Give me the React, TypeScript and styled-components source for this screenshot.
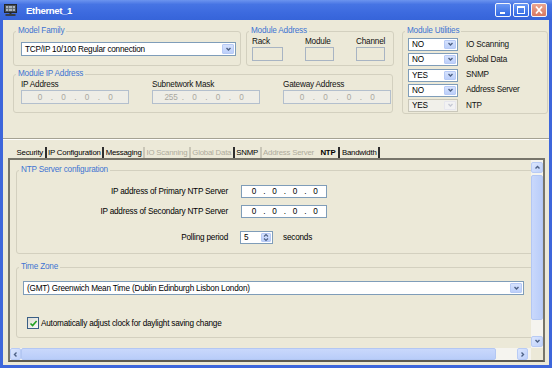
import React from "react";
import styled, { createGlobalStyle } from "styled-components";

const FONT = `"Liberation Sans", Arial, sans-serif`;

const Global = createGlobalStyle`
  html, body { margin: 0; padding: 0; background: #ece9d8; }
  body { font-family: ${FONT}; font-size: 8.2px; letter-spacing: -0.2px; color: #000; }
  *, *::before, *::after { box-sizing: border-box; }
`;

/* ---------- window chrome ---------- */
const Window = styled.div`
  width: 552px;
  height: 368px;
  display: flex;
  flex-direction: column;
  overflow: hidden;
  background: #ece9d8;
`;

const TitleBar = styled.div`
  flex: none;
  height: 20px;
  display: flex;
  align-items: center;
  padding: 0 5px 0 4px;
  background: linear-gradient(180deg, #6c94ef 0%, #4674e4 22%, #3b69de 70%, #3664d9 100%);
`;

const TitleText = styled.span`
  flex: 1;
  margin-left: 9px;
  color: #fff;
  font-size: 9.6px;
  letter-spacing: -0.35px;
  font-weight: bold;
`;

const WinButtons = styled.div`
  display: flex;
  gap: 2px;
`;

const WinButton = styled.div<{ $close?: boolean }>`
  width: 16px;
  height: 14px;
  border: 1px solid #f4f6fc;
  border-radius: 2px;
  display: flex;
  align-items: center;
  justify-content: center;
  background: ${(p) =>
    p.$close ? "linear-gradient(#eaa591, #d97860)" : "linear-gradient(#6a98f4, #3168e2)"};
`;

const Frame = styled.div`
  flex: 1;
  min-height: 0;
  display: flex;
  flex-direction: column;
  border: 3px solid #3d66db;
  border-top: 0;
`;

/* ---------- top configuration area ---------- */
const TopArea = styled.div`
  flex: none;
  height: 118px;
  display: flex;
  align-items: flex-start;
  padding: 6px 0 0 10px;
`;

const LeftCol = styled.div`
  flex: none;
  width: 381px;
  display: flex;
  flex-direction: column;
  gap: 3px;
`;

const GroupRow = styled.div`
  display: flex;
  gap: 5px;
`;

const Group = styled.fieldset<{ $w: number; $h: number; $ml?: number }>`
  flex: none;
  margin: 0 0 0 ${(p) => p.$ml ?? 0}px;
  padding: 0;
  min-width: 0;
  width: ${(p) => p.$w}px;
  height: ${(p) => p.$h}px;
  border: 1px solid #d3d0bf;
  border-radius: 3px;
`;

const Legend = styled.legend`
  margin-left: 2px;
  padding: 0 2px;
  color: #3f74d2;
  line-height: 10px;
`;

const GroupBody = styled.div<{ $pad: string }>`
  padding: ${(p) => p.$pad};
`;

const FieldGrid = styled.div<{ $cols: string; $gap: number }>`
  display: grid;
  grid-template-columns: ${(p) => p.$cols};
  column-gap: ${(p) => p.$gap}px;
  row-gap: 0;
`;

const FieldLabel = styled.span`
  line-height: 10px;
  white-space: nowrap;
  color: #111;
`;

const EmptyBox = styled.div<{ $w: number }>`
  width: ${(p) => p.$w}px;
  height: 14px;
  border: 1px solid #a8b4c3;
  background: #ece9d8;
`;

const IpBox = styled.div<{ $w: number; $h: number; $pl: number; $disabled?: boolean }>`
  width: ${(p) => p.$w}px;
  height: ${(p) => p.$h}px;
  padding-left: ${(p) => p.$pl}px;
  display: flex;
  align-items: center;
  border: 1px solid ${(p) => (p.$disabled ? "#b3bfcd" : "#7f9db9")};
  background: ${(p) => (p.$disabled ? "#eeede6" : "#fff")};
  color: ${(p) => (p.$disabled ? "#a9a89f" : "#000")};
`;

const IpSeg = styled.span<{ $w: number }>`
  flex: none;
  width: ${(p) => p.$w}px;
  text-align: center;
`;

/* combo box */
const Combo = styled.div<{ $w: number; $h?: number; $disabled?: boolean }>`
  flex: none;
  width: ${(p) => p.$w}px;
  height: ${(p) => p.$h ?? 13}px;
  display: flex;
  align-items: stretch;
  border: 1px solid ${(p) => (p.$disabled ? "#c9c7ba" : "#7f9db9")};
  background: ${(p) => (p.$disabled ? "#f1f0ea" : "#fff")};
`;

const ComboText = styled.span`
  flex: 1;
  padding-left: 3px;
  display: flex;
  align-items: center;
  white-space: nowrap;
  overflow: hidden;
`;

const ComboButton = styled.span<{ $disabled?: boolean }>`
  flex: none;
  width: 12px;
  margin: 1px;
  border-radius: 1px;
  display: flex;
  align-items: center;
  justify-content: center;
  border: 1px solid ${(p) => (p.$disabled ? "#e6e6ee" : "#b7caf5")};
  background: ${(p) =>
    p.$disabled ? "#f2f2f3" : "linear-gradient(#d6e2fd, #bccffa)"};
`;

const UtilList = styled.div`
  display: flex;
  flex-direction: column;
  gap: 2.25px;
  padding: 2px 0 0 5px;
`;

const UtilRow = styled.div`
  display: flex;
  align-items: center;
  gap: 8px;
`;

const Separator = styled.div`
  flex: none;
  height: 2px;
  border-top: 1px solid #a5a293;
  border-bottom: 1px solid #fdfdfb;
`;

/* ---------- tabs ---------- */
const TabStrip = styled.div`
  flex: none;
  height: 18px;
  display: flex;
  align-items: flex-end;
  padding: 0 0 0 10px;
`;

type TabState = "on" | "off" | "sel";

const Tab = styled.div<{ $state: TabState; $first?: boolean; $last?: boolean }>`
  height: 11px;
  line-height: 11px;
  padding: 0 1.5px;
  white-space: nowrap;
  font-size: 7.8px;
  color: ${(p) => (p.$state === "off" ? "#aeab9c" : "#000")};
  font-weight: ${(p) => (p.$state === "sel" ? "bold" : "normal")};
  border-left: 2px solid
    ${(p) =>
      p.$first || p.$state === "sel"
        ? "transparent"
        : p.$state === "off"
        ? "#c9c6b7"
        : "#2e2e2e"};
  border-right: ${(p) => (p.$last ? "2px solid #2e2e2e" : "0")};
  ${(p) => (p.$state === "sel" ? "padding: 0 3px;" : "")}
`;

/* ---------- tab panel ---------- */
const Panel = styled.div`
  flex: 1;
  min-height: 0;
  margin: 0 4px 3px 5px;
  border: 2px solid;
  border-color: #77756a #77756a #5b5950 #77756a;
  display: grid;
  grid-template-columns: 1fr 12px;
  grid-template-rows: 1fr 12px;
`;

const Viewport = styled.div`
  overflow: hidden;
  padding: 5px 0 0 6px;
  display: flex;
  flex-direction: column;
  gap: 8px;
`;

const NtpGrid = styled.div`
  display: grid;
  grid-template-columns: 211px auto 1fr;
  column-gap: 13px;
  row-gap: 7px;
  align-items: center;
`;

const RowLabel = styled.span`
  text-align: right;
  white-space: nowrap;
  line-height: 13px;
`;

const PollCell = styled.div`
  grid-column: 2 / span 2;
  margin-top: 6px;
  margin-left: -1px;
  display: flex;
  align-items: center;
  gap: 10px;
`;

const PollLabel = styled(RowLabel)`
  margin-top: 6px;
`;

const Spin = styled.div`
  width: 33px;
  height: 13px;
  display: flex;
  border: 1px solid #7f9db9;
  background: #fff;
`;

const SpinText = styled.span`
  flex: 1;
  padding-left: 3px;
  display: flex;
  align-items: center;
`;

const SpinButton = styled.span`
  width: 10px;
  margin: 1px;
  border-radius: 1px;
  border: 1px solid #b7caf5;
  background: linear-gradient(#d6e2fd, #bccffa);
  display: flex;
  align-items: center;
  justify-content: center;
`;

const CheckRow = styled.label`
  display: flex;
  align-items: center;
  gap: 2px;
  margin: 22px 0 0 4px;
`;

const CheckBox = styled.span`
  width: 12px;
  height: 12px;
  border: 1px solid #3a5f86;
  background: linear-gradient(135deg, #dcdcd3, #fafaf8);
  display: flex;
  align-items: center;
  justify-content: center;
`;

/* scrollbars */
const VScroll = styled.div`
  display: flex;
  flex-direction: column;
  background: #f5f4ef;
  padding: 2px 0 1px;
`;

const HScroll = styled.div`
  display: flex;
  background: #f5f4ef;
  padding-right: 3px;
`;

const ScrollBtn = styled.div<{ $w: number; $h: number }>`
  flex: none;
  width: ${(p) => p.$w}px;
  height: ${(p) => p.$h}px;
  border: 1px solid #b8cbf5;
  border-radius: 2px;
  background: linear-gradient(135deg, #dbe6fe, #bfd1fa);
  display: flex;
  align-items: center;
  justify-content: center;
`;

const Track = styled.div<{ $dir: "v" | "h" }>`
  flex: 1;
  display: flex;
  flex-direction: ${(p) => (p.$dir === "v" ? "column" : "row")};
  padding: ${(p) => (p.$dir === "v" ? "2px 0 0" : "0")};
`;

const Thumb = styled.div<{ $dir: "v" | "h"; $len: number }>`
  flex: none;
  ${(p) => (p.$dir === "v" ? `height: ${p.$len}px;` : `width: ${p.$len}px;`)}
  border: 1px solid #b3c7f3;
  border-radius: 2px;
  background: ${(p) =>
    p.$dir === "v"
      ? "linear-gradient(90deg, #c9d8fc, #b9cdf9)"
      : "linear-gradient(#c9d8fc, #b9cdf9)"};
`;

const Corner = styled.div`
  background: #ece9d8;
`;

/* ---------- small drawings ---------- */
const Chevron = ({ dir = "down", color = "#4d6185" }: { dir?: "down" | "up" | "left" | "right"; color?: string }) => {
  const d =
    dir === "down"
      ? "M1.5 2 L3.5 4 L5.5 2"
      : dir === "up"
      ? "M1.5 4.5 L3.5 2.5 L5.5 4.5"
      : dir === "left"
      ? "M4.5 1.5 L2.5 3.5 L4.5 5.5"
      : "M2.5 1.5 L4.5 3.5 L2.5 5.5";
  return (
    <svg width="7" height="7" viewBox="0 0 7 7">
      <path d={d} fill="none" stroke={color} strokeWidth="1.4" />
    </svg>
  );
};

const AppIcon = () => (
  <svg width="13" height="12" viewBox="0 0 13 12">
    <rect x="0.5" y="0.5" width="12" height="8" fill="#4a4f57" stroke="#23262b" />
    <rect x="2" y="2" width="9" height="5" fill="#a9b3bd" />
    <path d="M2 4.5 H11 M4.5 2 V7 M8.5 2 V7" stroke="#5d6670" strokeWidth="0.8" />
    <rect x="5.5" y="9" width="2" height="1" fill="#2b2e33" />
    <rect x="1.5" y="10" width="10" height="2" fill="#3a3e44" />
  </svg>
);

const MinGlyph = () => (
  <svg width="10" height="10" viewBox="0 0 10 10">
    <rect x="2" y="7" width="5" height="2" fill="#fff" />
  </svg>
);
const MaxGlyph = () => (
  <svg width="10" height="10" viewBox="0 0 10 10">
    <rect x="1.5" y="1.5" width="7" height="7" fill="none" stroke="#fff" />
    <rect x="1" y="1" width="8" height="2" fill="#fff" />
  </svg>
);
const CloseGlyph = () => (
  <svg width="10" height="10" viewBox="0 0 10 10">
    <path d="M2 1.5 L8 8.5 M8 1.5 L2 8.5" stroke="#fff" strokeWidth="1.8" />
  </svg>
);

const Check = () => (
  <svg width="9" height="9" viewBox="0 0 9 9">
    <path d="M1.5 4.5 L3.6 6.6 L7.6 2" fill="none" stroke="#21a121" strokeWidth="1.6" />
  </svg>
);

/* ---------- composites ---------- */
const ComboField = ({
  w,
  h,
  value,
  disabled,
}: {
  w: number;
  h?: number;
  value: string;
  disabled?: boolean;
}) => (
  <Combo $w={w} $h={h} $disabled={disabled}>
    <ComboText>{value}</ComboText>
    <ComboButton $disabled={disabled}>
      <Chevron color={disabled ? "#c6c9d4" : "#4d6185"} />
    </ComboButton>
  </Combo>
);

const IpField = ({
  parts,
  w,
  h,
  pl,
  seg,
  dot,
  disabled,
}: {
  parts: string[];
  w: number;
  h: number;
  pl: number;
  seg: number;
  dot: number;
  disabled?: boolean;
}) => (
  <IpBox $w={w} $h={h} $pl={pl} $disabled={disabled}>
    {parts.map((p, i) => (
      <React.Fragment key={i}>
        {i > 0 && <IpSeg $w={dot}>.</IpSeg>}
        <IpSeg $w={seg}>{p}</IpSeg>
      </React.Fragment>
    ))}
  </IpBox>
);

const utilities: [string, string, boolean?][] = [
  ["NO", "IO Scanning"],
  ["NO", "Global Data"],
  ["YES", "SNMP"],
  ["NO", "Address Server"],
  ["YES", "NTP", true],
];

const tabs: [string, TabState][] = [
  ["Security", "on"],
  ["IP Configuration", "on"],
  ["Messaging", "on"],
  ["IO Scanning", "off"],
  ["Global Data", "off"],
  ["SNMP", "on"],
  ["Address Server", "off"],
  ["NTP", "sel"],
  ["Bandwidth", "on"],
];

export default function App() {
  return (
    <>
      <Global />
      <Window>
        <TitleBar>
          <AppIcon />
          <TitleText>Ethernet_1</TitleText>
          <WinButtons>
            <WinButton>
              <MinGlyph />
            </WinButton>
            <WinButton>
              <MaxGlyph />
            </WinButton>
            <WinButton $close>
              <CloseGlyph />
            </WinButton>
          </WinButtons>
        </TitleBar>

        <Frame>
          <TopArea>
            <LeftCol>
              <GroupRow>
                <Group $w={228} $h={40}>
                  <Legend>Model Family</Legend>
                  <GroupBody $pad="6px 3px 0 7px">
                    <ComboField w={215} h={14} value="TCP/IP 10/100 Regular connection" />
                  </GroupBody>
                </Group>
                <Group $w={148} $h={40}>
                  <Legend>Module Address</Legend>
                  <GroupBody $pad="1px 0 0 5px">
                    <FieldGrid $cols="31px 29px 29px" $gap={22}>
                      <FieldLabel>Rack</FieldLabel>
                      <FieldLabel>Module</FieldLabel>
                      <FieldLabel>Channel</FieldLabel>
                      <EmptyBox $w={31} />
                      <EmptyBox $w={29} />
                      <EmptyBox $w={29} />
                    </FieldGrid>
                  </GroupBody>
                </Group>
              </GroupRow>
              <Group $w={380} $h={44}>
                <Legend>Module IP Address</Legend>
                <GroupBody $pad="1px 0 0 7px">
                  <FieldGrid $cols="108px 108px 108px" $gap={23}>
                    <FieldLabel>IP Address</FieldLabel>
                    <FieldLabel>Subnetwork Mask</FieldLabel>
                    <FieldLabel>Gateway Address</FieldLabel>
                    <IpField parts={["0", "0", "0", "0"]} w={108} h={14} pl={9} seg={18} dot={5.5} disabled />
                    <IpField parts={["255", "0", "0", "0"]} w={108} h={14} pl={9} seg={18} dot={5.5} disabled />
                    <IpField parts={["0", "0", "0", "0"]} w={108} h={14} pl={9} seg={18} dot={5.5} disabled />
                  </FieldGrid>
                </GroupBody>
              </Group>
            </LeftCol>

            <Group $w={146} $h={88} $ml={8}>
              <Legend>Module Utilities</Legend>
              <UtilList>
                {utilities.map(([v, label, dis]) => (
                  <UtilRow key={label}>
                    <ComboField w={50} value={v} disabled={dis} />
                    <FieldLabel>{label}</FieldLabel>
                  </UtilRow>
                ))}
              </UtilList>
            </Group>
          </TopArea>

          <Separator />

          <TabStrip>
            {tabs.map(([t, s], i) => (
              <Tab key={t} $state={s} $first={i === 0} $last={i === tabs.length - 1}>
                {t}
              </Tab>
            ))}
          </TabStrip>

          <Panel>
            <Viewport>
              <Group $w={525} $h={89}>
                <Legend>NTP Server configuration</Legend>
                <GroupBody $pad="10px 0 0 0">
                  <NtpGrid>
                    <RowLabel>IP address of Primary NTP Server</RowLabel>
                    <IpField parts={["0", "0", "0", "0"]} w={86} h={13} pl={5} seg={14} dot={6.5} />
                    <span />
                    <RowLabel>IP address of Secondary NTP Server</RowLabel>
                    <IpField parts={["0", "0", "0", "0"]} w={86} h={13} pl={5} seg={14} dot={6.5} />
                    <span />
                    <PollLabel>Polling period</PollLabel>
                    <PollCell>
                      <Spin>
                        <SpinText>5</SpinText>
                        <SpinButton>
                          <svg width="6" height="9" viewBox="0 0 6 9">
                            <path d="M1 3.5 L3 1.5 L5 3.5 M1 5.5 L3 7.5 L5 5.5" fill="none" stroke="#4d6185" strokeWidth="1.1" />
                          </svg>
                        </SpinButton>
                      </Spin>
                      <span>seconds</span>
                    </PollCell>
                  </NtpGrid>
                </GroupBody>
              </Group>

              <Group $w={525} $h={76}>
                <Legend>Time Zone</Legend>
                <GroupBody $pad="9px 0 0 6px">
                  <ComboField w={501} h={14} value="(GMT) Greenwich Mean Time (Dublin Edinburgh Lisbon London)" />
                  <CheckRow>
                    <CheckBox>
                      <Check />
                    </CheckBox>
                    <span>Automatically adjust clock for daylight saving change</span>
                  </CheckRow>
                </GroupBody>
              </Group>
            </Viewport>

            <VScroll>
              <ScrollBtn $w={12} $h={11}>
                <Chevron dir="up" />
              </ScrollBtn>
              <Track $dir="v">
                <Thumb $dir="v" $len={145} />
              </Track>
              <ScrollBtn $w={12} $h={11}>
                <Chevron dir="down" />
              </ScrollBtn>
            </VScroll>

            <HScroll>
              <ScrollBtn $w={11} $h={12}>
                <Chevron dir="left" />
              </ScrollBtn>
              <Track $dir="h">
                <Thumb $dir="h" $len={475} />
              </Track>
              <ScrollBtn $w={11} $h={12}>
                <Chevron dir="right" />
              </ScrollBtn>
            </HScroll>

            <Corner />
          </Panel>
        </Frame>
      </Window>
    </>
  );
}
